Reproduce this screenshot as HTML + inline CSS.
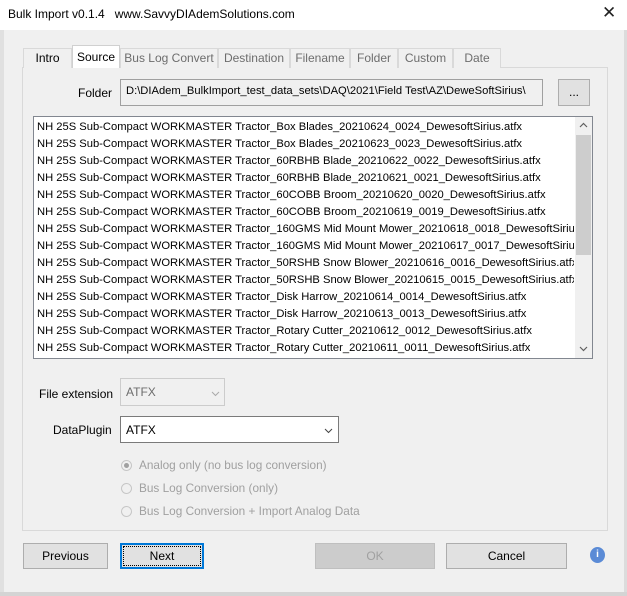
<!DOCTYPE html>
<html><head><meta charset="utf-8"><style>
*{box-sizing:border-box;margin:0;padding:0}
body{width:627px;height:596px;overflow:hidden;background:#f0f0f0;font-family:"Liberation Sans",sans-serif;font-size:12px;color:#000;position:relative}
.a{position:absolute}
.title{left:0;top:0;width:627px;height:30px;background:#fff}
.tab{position:absolute;top:48px;height:20px;border:1px solid #d9d9d9;border-bottom:none;background:#f0f0f0;text-align:center;line-height:19px;color:#6d6d6d;font-size:12px}
.panel{left:22px;top:67px;width:586px;height:464px;border:1px solid #d9d9d9}
.list div{height:17px;line-height:17px;white-space:nowrap;font-size:11.2px}
.btn{position:absolute;top:543px;height:26px;border:1px solid #adadad;background:#e1e1e1;text-align:center;line-height:24px;font-size:12px}
.radio{position:absolute;left:121px;color:#a0a0a0;font-size:11.8px}
.radio i{position:absolute;left:0;top:2px;width:11px;height:11px;border:1px solid #c6c6c6;border-radius:50%;background:#f0f0f0}
.radio span{position:absolute;left:18px;white-space:nowrap}
</style></head><body>
<div class="a" style="left:0;top:30px;width:4px;height:566px;background:#e0e0e0"></div>
<div class="a title"></div>
<div class="a" style="left:8px;top:7px;font-size:12px">Bulk Import v0.1.4&nbsp;&nbsp;&nbsp;www.SavvyDIAdemSolutions.com</div>
<div class="a" style="left:602px;top:3px;font-size:17px;font-weight:300;color:#222">✕</div>
<div class="a" style="left:624px;top:30px;width:3px;height:566px;background:#dcdcdc"></div>
<div class="a" style="left:0;top:592px;width:627px;height:4px;background:#d4d4d4"></div>

<div class="a panel"></div>
<div class="tab" style="left:23px;width:49px;color:#000">Intro</div>
<div class="tab" style="left:72px;width:48px;top:45px;height:23px;background:#fff;color:#000;border-color:#d0d0d0;line-height:22px">Source</div>
<div class="tab" style="left:120px;width:98px">Bus Log Convert</div>
<div class="tab" style="left:218px;width:72px">Destination</div>
<div class="tab" style="left:290px;width:60px">Filename</div>
<div class="tab" style="left:350px;width:48px">Folder</div>
<div class="tab" style="left:398px;width:55px">Custom</div>
<div class="tab" style="left:453px;width:48px">Date</div>

<div class="a" style="left:78px;top:86px;font-size:12px">Folder</div>
<div class="a" style="left:120px;top:79px;width:423px;height:27px;border:1px solid #a0a0a0;background:#f0f0f0;padding:5px 5px;white-space:nowrap;overflow:hidden;font-size:11.2px">D:\DIAdem_BulkImport_test_data_sets\DAQ\2021\Field Test\AZ\DeweSoftSirius\</div>
<div class="a" style="left:558px;top:79px;width:32px;height:27px;border:1px solid #adadad;background:#e1e1e1;text-align:center;line-height:25px">...</div>

<div class="a" style="left:33px;top:116px;width:560px;height:243px;border:1px solid #828790;background:#fff"></div>
<div class="a list" style="left:37px;top:119px;width:537px;overflow:hidden">
<div>NH 25S Sub-Compact WORKMASTER Tractor_Box Blades_20210624_0024_DewesoftSirius.atfx</div>
<div>NH 25S Sub-Compact WORKMASTER Tractor_Box Blades_20210623_0023_DewesoftSirius.atfx</div>
<div>NH 25S Sub-Compact WORKMASTER Tractor_60RBHB Blade_20210622_0022_DewesoftSirius.atfx</div>
<div>NH 25S Sub-Compact WORKMASTER Tractor_60RBHB Blade_20210621_0021_DewesoftSirius.atfx</div>
<div>NH 25S Sub-Compact WORKMASTER Tractor_60COBB Broom_20210620_0020_DewesoftSirius.atfx</div>
<div>NH 25S Sub-Compact WORKMASTER Tractor_60COBB Broom_20210619_0019_DewesoftSirius.atfx</div>
<div>NH 25S Sub-Compact WORKMASTER Tractor_160GMS Mid Mount Mower_20210618_0018_DewesoftSirius.atfx</div>
<div>NH 25S Sub-Compact WORKMASTER Tractor_160GMS Mid Mount Mower_20210617_0017_DewesoftSirius.atfx</div>
<div>NH 25S Sub-Compact WORKMASTER Tractor_50RSHB Snow Blower_20210616_0016_DewesoftSirius.atfx</div>
<div>NH 25S Sub-Compact WORKMASTER Tractor_50RSHB Snow Blower_20210615_0015_DewesoftSirius.atfx</div>
<div>NH 25S Sub-Compact WORKMASTER Tractor_Disk Harrow_20210614_0014_DewesoftSirius.atfx</div>
<div>NH 25S Sub-Compact WORKMASTER Tractor_Disk Harrow_20210613_0013_DewesoftSirius.atfx</div>
<div>NH 25S Sub-Compact WORKMASTER Tractor_Rotary Cutter_20210612_0012_DewesoftSirius.atfx</div>
<div>NH 25S Sub-Compact WORKMASTER Tractor_Rotary Cutter_20210611_0011_DewesoftSirius.atfx</div>
</div>
<div class="a" style="left:575px;top:117px;width:17px;height:241px;background:#f0f0f0"></div>
<div class="a" style="left:576px;top:135px;width:15px;height:120px;background:#cdcdcd"></div>
<svg class="a" style="left:579px;top:122px" width="9" height="6"><path d="M1 5 L4.5 1.5 L8 5" fill="none" stroke="#606060" stroke-width="1.2"/></svg>
<svg class="a" style="left:579px;top:346px" width="9" height="6"><path d="M1 1 L4.5 4.5 L8 1" fill="none" stroke="#606060" stroke-width="1.2"/></svg>

<div class="a" style="left:39px;top:387px;font-size:12px">File extension</div>
<div class="a" style="left:120px;top:378px;width:105px;height:28px;border:1px solid #ccc;background:#f0f0f0;padding:6px 5px;color:#6d6d6d;font-size:12px">ATFX</div>
<svg class="a" style="left:211px;top:391px" width="9" height="6"><path d="M1 1 L4.5 4.5 L8 1" fill="none" stroke="#aaa" stroke-width="1"/></svg>
<div class="a" style="left:53px;top:423px;font-size:12px">DataPlugin</div>
<div class="a" style="left:120px;top:416px;width:219px;height:27px;border:1px solid #7a7a7a;background:#fff;padding:6px 5px;font-size:12px">ATFX</div>
<svg class="a" style="left:324px;top:428px" width="9" height="6"><path d="M1 1 L4.5 4.5 L8 1" fill="none" stroke="#444" stroke-width="1"/></svg>

<div class="radio" style="top:458px"><i></i><span>Analog only (no bus log conversion)</span></div>
<div class="a" style="left:124px;top:463px;width:5px;height:5px;border-radius:50%;background:#a0a0a0"></div>
<div class="radio" style="top:481px"><i></i><span>Bus Log Conversion (only)</span></div>
<div class="radio" style="top:504px"><i></i><span>Bus Log Conversion + Import Analog Data</span></div>

<div class="btn" style="left:23px;width:85px">Previous</div>
<div class="btn" style="left:120px;width:84px;border:2px solid #0078d7;line-height:22px"><div style="position:absolute;inset:1px;border:1px dotted #000"></div>Next</div>
<div class="btn" style="left:315px;width:120px;background:#ccc;border-color:#bfbfbf;color:#a0a0a0">OK</div>
<div class="btn" style="left:446px;width:121px">Cancel</div>
<div class="a" style="left:590px;top:547px;width:15px;height:16px;border-radius:50%;background:#5b8bd6;color:#fff;font-size:10px;font-weight:bold;text-align:center;line-height:16px">i</div>
</body></html>
